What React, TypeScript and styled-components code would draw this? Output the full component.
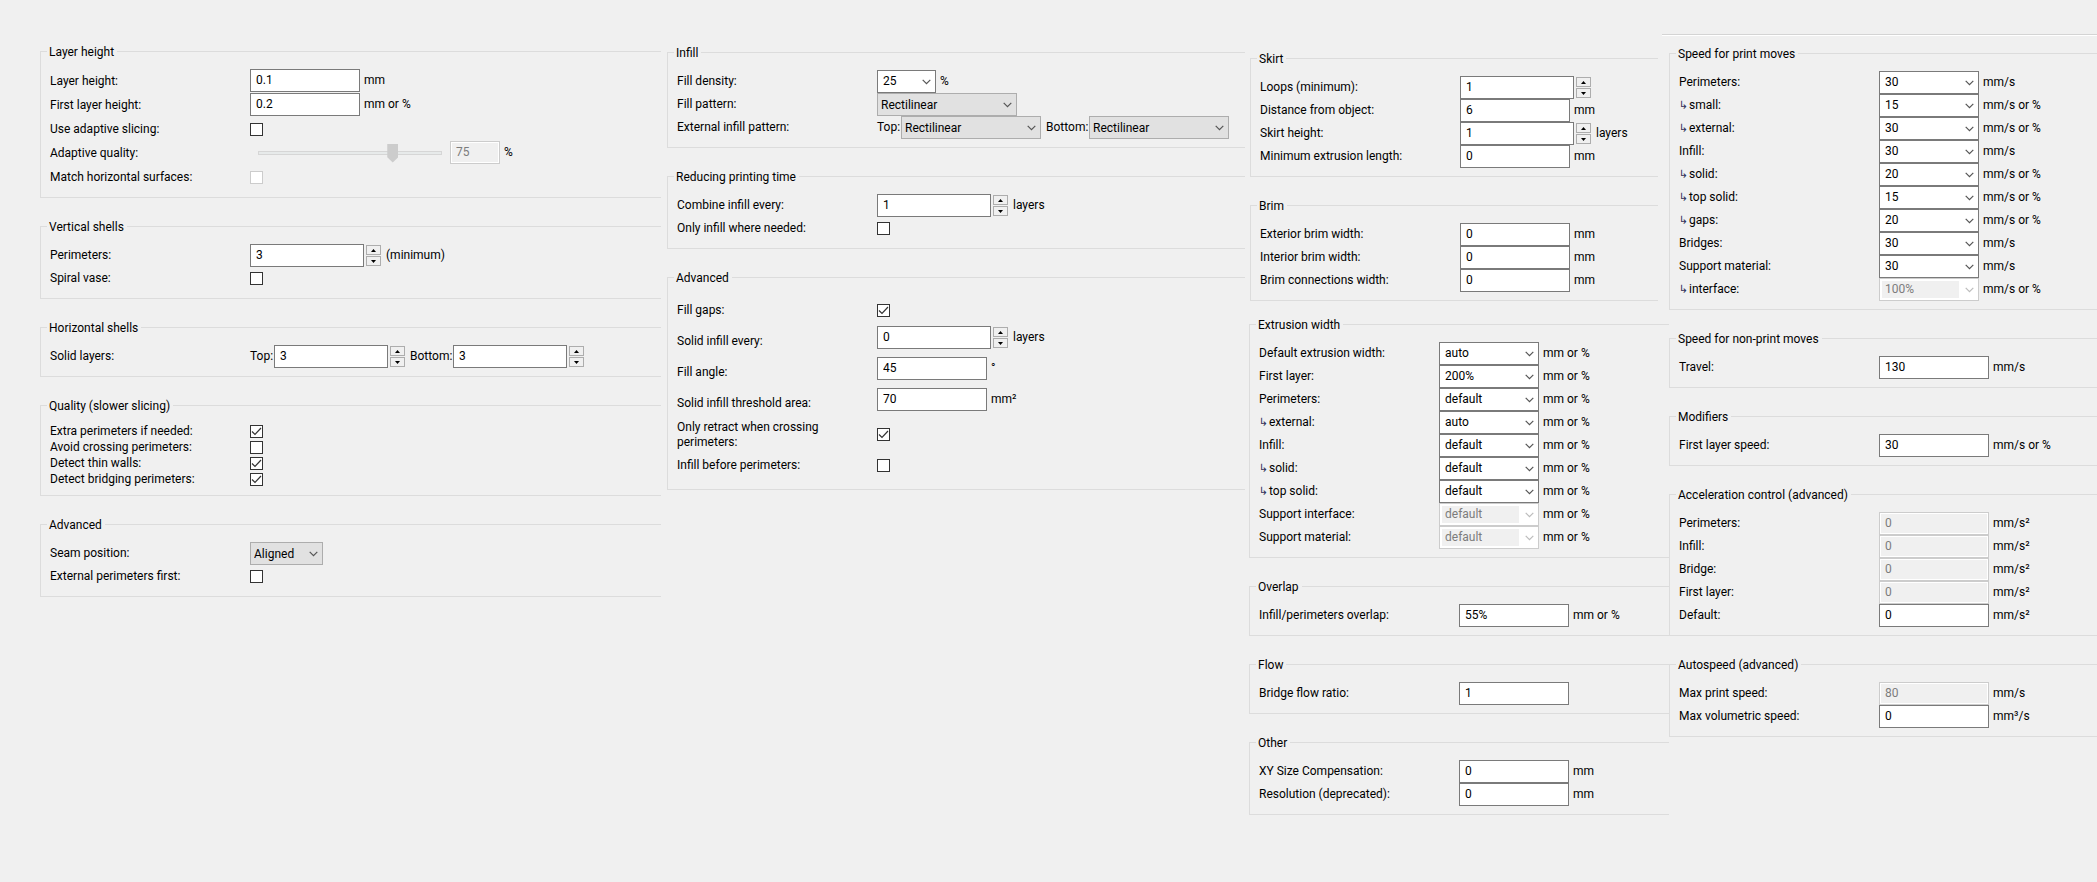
import React, { useId } from 'react';
import styled, { createGlobalStyle } from 'styled-components';

const GlobalStyle = createGlobalStyle`
  *, *::before, *::after { box-sizing: border-box; }
  body {
    margin: 0;
    background: #f0f0f0;
  }
  body, input, select, button {
    font: 12px/15px Roboto, "Open Sans", sans-serif;
    color: #000;
  }
`;

const Page = styled.main`
  display: grid;
  grid-template-columns: 627fr 582fr 420fr 428fr;
  align-items: start;
  min-height: 100vh;
  padding: 34px 0 32px 40px;
`;

const Column = styled.div<{ $top?: number; $right?: number }>`
  display: flex;
  flex-direction: column;
  gap: 20px;
  min-width: 0;
  padding-top: ${(p) => p.$top ?? 0}px;
  padding-right: ${(p) => p.$right ?? 0}px;
`;

const Stack = styled.div<{ $inset?: boolean }>`
  display: flex;
  flex-direction: column;
  gap: 20px;
  margin: ${(p) => (p.$inset ? '0 11px 0 1px' : '0')};
`;

const SkirtColumn = styled(Column)`
  gap: 15px;
`;

const Separator = styled.hr`
  height: 2px;
  margin: 0 0 -11px -7px;
  border: 0;
  border-top: 1px solid #d4d4d4;
  border-bottom: 1px solid #fff;
`;

const Group = styled.fieldset`
  display: block;
  min-width: 0;
  margin: 0;
  padding: 9px 0 8px 6px;
  border: 1px solid #dcdcdc;
  border-right: 0;
`;

const Legend = styled.legend`
  padding: 2px 3px 0 2px;
  line-height: 15px;
`;

const Row = styled.div<{ $height: number; $labelWidth: number }>`
  display: grid;
  grid-template-columns: ${(p) => p.$labelWidth}px 1fr;
  align-items: center;
  min-height: ${(p) => p.$height}px;
  padding-left: 3px;
`;

const Label = styled.label`
  padding-right: 40px;
`;

const Branch = styled.span`
  display: inline-block;
  width: 10px;
  font: 11px/9px "DejaVu Sans", sans-serif;
  color: #33335c;
`;

const Controls = styled.div<{ $center?: boolean }>`
  display: flex;
  align-items: center;
  align-self: ${(p) => (p.$center ? 'center' : 'start')};
  white-space: nowrap;
`;

const Unit = styled.span<{ $afterSpin?: boolean }>`
  margin-left: ${(p) => (p.$afterSpin ? 5 : 4)}px;
`;

const Prefix = styled.label<{ $wide?: boolean }>`
  flex: none;
  width: ${(p) => (p.$wide ? 48 : 24)}px;
  padding-left: ${(p) => (p.$wide ? 5 : 0)}px;
`;

const TextBox = styled.input<{ $width: number }>`
  width: ${(p) => p.$width}px;
  height: 23px;
  padding: 0 5px 1px;
  border: 1px solid #7a7a7a;
  border-radius: 0;
  background: #fff;
  outline-offset: -1px;

  &:disabled {
    border-color: #ccc;
    background: #f0f0f0;
    box-shadow: inset 0 0 0 1px #fff;
    color: #7c7c7c;
  }
`;

const SpinButtons = styled.span`
  display: flex;
  flex-direction: column;
  gap: 1px;
  margin-left: 2px;
`;

const SpinButton = styled.button`
  display: flex;
  align-items: center;
  justify-content: center;
  width: 15px;
  height: 10px;
  padding: 0;
  border: 1px solid #adadad;
  background: #f0f0f0;
`;

const SelectFrame = styled.span<{ $width: number; $disabled?: boolean }>`
  position: relative;
  display: block;
  width: ${(p) => p.$width}px;
  height: 23px;

  svg {
    position: absolute;
    top: 9px;
    right: 5px;
    pointer-events: none;
    stroke: ${(p) => (p.$disabled ? '#bcbcbc' : '#555')};
  }
`;

const ComboSelect = styled.select`
  appearance: none;
  display: block;
  width: 100%;
  height: 23px;
  padding: 0 18px 1px 5px;
  border: 1px solid #7a7a7a;
  border-radius: 0;
  background: #fff;

  &:disabled {
    border-color: #ccc;
    background: linear-gradient(#f0f0f0, #f0f0f0) 2px 2px / calc(100% - 21px) 17px no-repeat #fff;
    color: #7c7c7c;
    opacity: 1;
  }
`;

const ChoiceSelect = styled(ComboSelect)`
  padding: 1px 18px 0 3px;
  border-color: #adadad;
  background: #e1e1e1;
`;

const CheckBox = styled.input`
  appearance: none;
  display: grid;
  place-items: center;
  width: 13px;
  height: 13px;
  margin: 0;
  border: 1px solid #333;
  background: #fff;

  &:disabled {
    border-color: #ccc;
  }
`;

const CheckFrame = styled.span`
  position: relative;
  display: block;
  width: 13px;
  height: 13px;

  svg {
    position: absolute;
    inset: 0;
    pointer-events: none;
  }
`;

const Slider = styled.input`
  appearance: none;
  width: 200px;
  height: 23px;
  margin: 0;
  padding: 0 8px;
  background: none;

  &::-webkit-slider-runnable-track {
    height: 4px;
    border: 1px solid #d6d6d6;
    background: #e7eaea;
  }
  &::-webkit-slider-thumb {
    appearance: none;
    width: 11px;
    height: 19px;
    margin-top: -8px;
    border: 0;
    border-radius: 0;
    background: #ccc;
    clip-path: polygon(0 0, 100% 0, 100% 73%, 50% 100%, 0 73%);
  }
`;

type Control =
  | { kind: 'text'; value: string; width?: number; unit?: string; disabled?: boolean }
  | { kind: 'spin'; value: string; unit?: string }
  | { kind: 'combo'; value: string; width?: number; unit?: string; disabled?: boolean }
  | { kind: 'choice'; value: string; width?: number }
  | { kind: 'check'; checked?: boolean; disabled?: boolean }
  | { kind: 'quality'; value: number }
  | { kind: 'pair'; control: 'spin' | 'choice'; top: string; bottom: string };

interface Option {
  label: string;
  child?: boolean;
  control: Control;
}

interface GroupProps {
  title: string;
  rowHeight?: number;
  labelWidth?: number;
  options: Option[];
}

const Chevron = () => (
  <svg width="9" height="6" viewBox="0 0 9 6" fill="none" strokeWidth="1.2" aria-hidden="true">
    <path d="M0.7 0.8 4.5 4.6 8.3 0.8" />
  </svg>
);

function Spin({ id, value }: { id: string; value: string }) {
  return (
    <>
      <TextBox id={id} $width={114} defaultValue={value} inputMode="numeric" />
      <SpinButtons>
        <SpinButton type="button" aria-label="Increase">
          <svg width="5" height="3" viewBox="0 0 5 3" aria-hidden="true"><path d="M0 3 2.5 0 5 3Z" /></svg>
        </SpinButton>
        <SpinButton type="button" aria-label="Decrease">
          <svg width="5" height="3" viewBox="0 0 5 3" aria-hidden="true"><path d="M0 0 2.5 3 5 0Z" /></svg>
        </SpinButton>
      </SpinButtons>
    </>
  );
}

function Combo({ id, value, width = 100, disabled }: { id: string; value: string; width?: number; disabled?: boolean }) {
  return (
    <SelectFrame $width={width} $disabled={disabled}>
      <ComboSelect id={id} defaultValue={value} disabled={disabled}>
        <option>{value}</option>
      </ComboSelect>
      <Chevron />
    </SelectFrame>
  );
}

function Choice({ id, value, width = 140 }: { id: string; value: string; width?: number }) {
  return (
    <SelectFrame $width={width}>
      <ChoiceSelect id={id} defaultValue={value}>
        <option>{value}</option>
      </ChoiceSelect>
      <Chevron />
    </SelectFrame>
  );
}

function ControlView({ id, control }: { id: string; control: Control }) {
  switch (control.kind) {
    case 'text':
      return (
        <Controls>
          <TextBox id={id} $width={control.width ?? 110} defaultValue={control.value} disabled={control.disabled} />
          {control.unit && <Unit>{control.unit}</Unit>}
        </Controls>
      );
    case 'spin':
      return (
        <Controls>
          <Spin id={id} value={control.value} />
          {control.unit && <Unit $afterSpin>{control.unit}</Unit>}
        </Controls>
      );
    case 'combo':
      return (
        <Controls>
          <Combo id={id} value={control.value} width={control.width} disabled={control.disabled} />
          {control.unit && <Unit>{control.unit}</Unit>}
        </Controls>
      );
    case 'choice':
      return (
        <Controls>
          <Choice id={id} value={control.value} width={control.width} />
        </Controls>
      );
    case 'check':
      return (
        <Controls $center>
          <CheckFrame>
            <CheckBox type="checkbox" id={id} defaultChecked={control.checked} disabled={control.disabled} />
            {control.checked && (
              <svg width="13" height="13" viewBox="0 0 13 13" fill="none" stroke="#333" strokeWidth="1.2" aria-hidden="true">
                <path d="M2 6.5 5 9.5 11 3" />
              </svg>
            )}
          </CheckFrame>
        </Controls>
      );
    case 'quality':
      return (
        <Controls>
          <Slider type="range" id={id} defaultValue={control.value} min={0} max={100} disabled />
          <TextBox $width={50} defaultValue={String(control.value)} disabled aria-label="Adaptive quality value" />
          <Unit>%</Unit>
        </Controls>
      );
    case 'pair': {
      const Part = control.control === 'spin' ? Spin : Choice;
      return (
        <Controls>
          <Prefix htmlFor={id}>Top:</Prefix>
          <Part id={id} value={control.top} />
          <Prefix $wide htmlFor={`${id}-bottom`}>Bottom:</Prefix>
          <Part id={`${id}-bottom`} value={control.bottom} />
        </Controls>
      );
    }
  }
}

function OptionGroup({ title, rowHeight = 23, labelWidth = 200, options }: GroupProps) {
  const base = useId();
  return (
    <Group>
      <Legend>{title}</Legend>
      {options.map((option, i) => {
        const id = `${base}-${i}`;
        return (
          <Row key={id} $height={rowHeight} $labelWidth={labelWidth}>
            <Label htmlFor={id}>
              {option.child && <Branch>↳</Branch>}
              {option.label}
            </Label>
            <ControlView id={id} control={option.control} />
          </Row>
        );
      })}
    </Group>
  );
}

const layers: GroupProps[] = [
  {
    title: 'Layer height',
    rowHeight: 24,
    options: [
      { label: 'Layer height:', control: { kind: 'text', value: '0.1', unit: 'mm' } },
      { label: 'First layer height:', control: { kind: 'text', value: '0.2', unit: 'mm or %' } },
      { label: 'Use adaptive slicing:', control: { kind: 'check' } },
      { label: 'Adaptive quality:', control: { kind: 'quality', value: 75 } },
      { label: 'Match horizontal surfaces:', control: { kind: 'check', disabled: true } },
    ],
  },
  {
    title: 'Vertical shells',
    options: [
      { label: 'Perimeters:', control: { kind: 'spin', value: '3', unit: '(minimum)' } },
      { label: 'Spiral vase:', control: { kind: 'check' } },
    ],
  },
  {
    title: 'Horizontal shells',
    options: [{ label: 'Solid layers:', control: { kind: 'pair', control: 'spin', top: '3', bottom: '3' } }],
  },
  {
    title: 'Quality (slower slicing)',
    rowHeight: 16,
    options: [
      { label: 'Extra perimeters if needed:', control: { kind: 'check', checked: true } },
      { label: 'Avoid crossing perimeters:', control: { kind: 'check' } },
      { label: 'Detect thin walls:', control: { kind: 'check', checked: true } },
      { label: 'Detect bridging perimeters:', control: { kind: 'check', checked: true } },
    ],
  },
  {
    title: 'Advanced',
    options: [
      { label: 'Seam position:', control: { kind: 'choice', value: 'Aligned', width: 73 } },
      { label: 'External perimeters first:', control: { kind: 'check' } },
    ],
  },
];

const infill: GroupProps[] = [
  {
    title: 'Infill',
    options: [
      { label: 'Fill density:', control: { kind: 'combo', value: '25', width: 59, unit: '%' } },
      { label: 'Fill pattern:', control: { kind: 'choice', value: 'Rectilinear' } },
      {
        label: 'External infill pattern:',
        control: { kind: 'pair', control: 'choice', top: 'Rectilinear', bottom: 'Rectilinear' },
      },
    ],
  },
  {
    title: 'Reducing printing time',
    options: [
      { label: 'Combine infill every:', control: { kind: 'spin', value: '1', unit: 'layers' } },
      { label: 'Only infill where needed:', control: { kind: 'check' } },
    ],
  },
  {
    title: 'Advanced',
    rowHeight: 31,
    options: [
      { label: 'Fill gaps:', control: { kind: 'check', checked: true } },
      { label: 'Solid infill every:', control: { kind: 'spin', value: '0', unit: 'layers' } },
      { label: 'Fill angle:', control: { kind: 'text', value: '45', unit: '°' } },
      { label: 'Solid infill threshold area:', control: { kind: 'text', value: '70', unit: 'mm²' } },
      { label: 'Only retract when crossing perimeters:', control: { kind: 'check', checked: true } },
      { label: 'Infill before perimeters:', control: { kind: 'check' } },
    ],
  },
];

const skirt: GroupProps[] = [
  {
    title: 'Skirt',
    options: [
      { label: 'Loops (minimum):', control: { kind: 'spin', value: '1' } },
      { label: 'Distance from object:', control: { kind: 'text', value: '6', unit: 'mm' } },
      { label: 'Skirt height:', control: { kind: 'spin', value: '1', unit: 'layers' } },
      { label: 'Minimum extrusion length:', control: { kind: 'text', value: '0', unit: 'mm' } },
    ],
  },
  {
    title: 'Brim',
    options: [
      { label: 'Exterior brim width:', control: { kind: 'text', value: '0', unit: 'mm' } },
      { label: 'Interior brim width:', control: { kind: 'text', value: '0', unit: 'mm' } },
      { label: 'Brim connections width:', control: { kind: 'text', value: '0', unit: 'mm' } },
    ],
  },
];

const width = (label: string, value: string, flags: { child?: boolean; disabled?: boolean } = {}): Option => ({
  label,
  child: flags.child,
  control: { kind: 'combo', value, unit: 'mm or %', disabled: flags.disabled },
});

const extrusion: GroupProps[] = [
  {
    title: 'Extrusion width',
    labelWidth: 180,
    options: [
      width('Default extrusion width:', 'auto'),
      width('First layer:', '200%'),
      width('Perimeters:', 'default'),
      width('external:', 'auto', { child: true }),
      width('Infill:', 'default'),
      width('solid:', 'default', { child: true }),
      width('top solid:', 'default', { child: true }),
      width('Support interface:', 'default', { disabled: true }),
      width('Support material:', 'default', { disabled: true }),
    ],
  },
  {
    title: 'Overlap',
    options: [{ label: 'Infill/perimeters overlap:', control: { kind: 'text', value: '55%', unit: 'mm or %' } }],
  },
  {
    title: 'Flow',
    options: [{ label: 'Bridge flow ratio:', control: { kind: 'text', value: '1' } }],
  },
  {
    title: 'Other',
    options: [
      { label: 'XY Size Compensation:', control: { kind: 'text', value: '0', unit: 'mm' } },
      { label: 'Resolution (deprecated):', control: { kind: 'text', value: '0', unit: 'mm' } },
    ],
  },
];

const speed = (
  label: string,
  value: string,
  flags: { child?: boolean; percent?: boolean; disabled?: boolean } = {},
): Option => ({
  label,
  child: flags.child,
  control: { kind: 'combo', value, unit: flags.percent ? 'mm/s or %' : 'mm/s', disabled: flags.disabled },
});

const acceleration = (label: string, disabled = true): Option => ({
  label,
  control: { kind: 'text', value: '0', unit: 'mm/s²', disabled },
});

const speeds: GroupProps[] = [
  {
    title: 'Speed for print moves',
    options: [
      speed('Perimeters:', '30'),
      speed('small:', '15', { child: true, percent: true }),
      speed('external:', '30', { child: true, percent: true }),
      speed('Infill:', '30'),
      speed('solid:', '20', { child: true, percent: true }),
      speed('top solid:', '15', { child: true, percent: true }),
      speed('gaps:', '20', { child: true, percent: true }),
      speed('Bridges:', '30'),
      speed('Support material:', '30'),
      speed('interface:', '100%', { child: true, percent: true, disabled: true }),
    ],
  },
  {
    title: 'Speed for non-print moves',
    options: [{ label: 'Travel:', control: { kind: 'text', value: '130', unit: 'mm/s' } }],
  },
  {
    title: 'Modifiers',
    options: [{ label: 'First layer speed:', control: { kind: 'text', value: '30', unit: 'mm/s or %' } }],
  },
  {
    title: 'Acceleration control (advanced)',
    options: [
      acceleration('Perimeters:'),
      acceleration('Infill:'),
      acceleration('Bridge:'),
      acceleration('First layer:'),
      acceleration('Default:', false),
    ],
  },
  {
    title: 'Autospeed (advanced)',
    options: [
      { label: 'Max print speed:', control: { kind: 'text', value: '80', unit: 'mm/s', disabled: true } },
      { label: 'Max volumetric speed:', control: { kind: 'text', value: '0', unit: 'mm³/s' } },
    ],
  },
];

const renderGroups = (groups: GroupProps[]) => groups.map((group) => <OptionGroup key={group.title} {...group} />);

export default function App() {
  return (
    <>
      <GlobalStyle />
      <Page>
        <Column $top={9} $right={6}>{renderGroups(layers)}</Column>
        <Column $top={10} $right={4}>{renderGroups(infill)}</Column>
        <SkirtColumn $top={16}>
          <Stack $inset>{renderGroups(skirt)}</Stack>
          <Stack>{renderGroups(extrusion)}</Stack>
        </SkirtColumn>
        <Column>
          <Separator />
          {renderGroups(speeds)}
        </Column>
      </Page>
    </>
  );
}
